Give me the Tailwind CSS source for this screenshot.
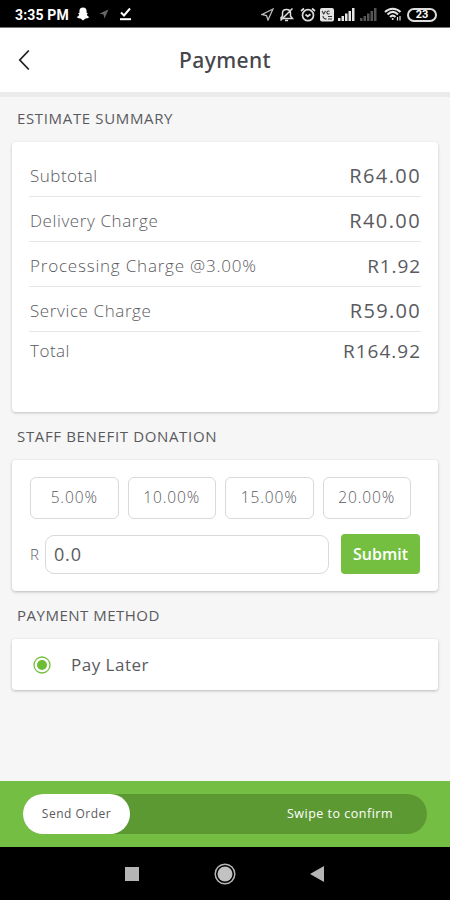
<!DOCTYPE html>
<html lang="en">

<head>
    <meta charset="UTF-8">
    <meta name="viewport" content="width=device-width, initial-scale=1.0">
    <title>Payment</title>
    <script src="https://cdn.jsdelivr.net/npm/@tailwindcss/browser@4"></script>
</head>

<body class="bg-[#f6f6f6] font-['Open_Sans',sans-serif] text-[#5a5a5e]">
    <div class="flex h-[900px] w-[450px] flex-col overflow-hidden">

        <!-- Status bar -->
        <div class="flex h-[28px] shrink-0 items-center border-b border-[#777] bg-black pl-[15px] pr-[13px] text-white">
            <span class="w-[55px] whitespace-nowrap font-['Roboto',sans-serif] text-[14px] font-bold leading-none tracking-[0.15px] pt-[2px]">3:35 PM</span>
            <svg class="ml-[6px] mt-[1px] h-[14px] w-[14px]" viewBox="0 0 14 14" fill="#fff">
                <path d="M7 .5C4.600.5 3.300 2.200 3.400 4.200V6L2 6.300 3.200 7.400C2.800 8.700 1.800 9.500.5 10L2.500 11.200 4.500 11.600 7 13.500 9.500 11.600 11.500 11.200 13.500 10C12.200 9.500 11.200 8.700 10.800 7.400L12 6.300 10.600 6V4.200C10.700 2.200 9.400.5 7 .5Z" />
            </svg>
            <svg class="ml-[9px] mt-[1px] h-[10px] w-[10px]" viewBox="0 0 10 10" fill="#666">
                <path d="M9.500.5.5 4.500 4.500 5.500 5.500 9.500Z" />
            </svg>
            <svg class="ml-[10px] mt-[1px] h-[14px] w-[13px]" viewBox="0 0 13 14" fill="none" stroke="#fff">
                <path d="M2 5.500 5 8.500 11 1.500" stroke-width="2" />
                <path d="M1 12.200H12" stroke-width="2" />
            </svg>
            <div class="ml-auto flex items-center pt-[1px]">
                <svg class="h-[13px] w-[13px]" viewBox="0 0 13 13" fill="none" stroke="#bbb" stroke-width="1.300">
                    <path d="M12 1 1 6.500 5.500 7.500 7 12Z" />
                </svg>
                <svg class="ml-[5px] h-[15px] w-[15px]" viewBox="0 0 15 15" fill="none" stroke="#ddd" stroke-width="1.500">
                    <path d="M1.500 11.500H13.500L11.500 9V6C11.500 3.800 9.800 2.500 7.500 2.500S3.500 3.800 3.500 6V9L1.500 11.500M6 13.500H9M13.500 1.500 1.500 13.500" />
                </svg>
                <svg class="ml-[6px] h-[15px] w-[16px]" viewBox="0 0 16 15" fill="none" stroke="#ddd" stroke-width="1.700">
                    <circle cx="8" cy="8.200" r="5.500" />
                    <path d="M1 4 4 1.500M15 4 12 1.500M5.500 7.500 7.700 9.300 10.500 7.200" />
                </svg>
                <svg class="ml-[4px] mt-[1px] h-[14px] w-[14px]" viewBox="0 0 14 14" fill="none" stroke="#333">
                    <rect x="0" y="0" width="14" height="13.500" rx="2" fill="#e4e4e4" stroke="none" />
                    <path d="M2 3 3.700 6 5.500 3M9.500 3.500A1.500 1.500 0 1 0 9.500 5.500M3 8C3 10 5 11 6.500 11M8 8.500H12M8 11H12" stroke-width="1.100" />
                </svg>
                <svg class="ml-[4px] h-[13px] w-[17px]" viewBox="0 0 17 13" fill="#e6e6e6">
                    <path d="M0 10H2.500V13H0ZM3.500 8H6V13H3.500ZM7 5.500H9.500V13H7ZM10.500 3H13V13H10.500ZM14 0H16.500V13H14Z" />
                </svg>
                <svg class="ml-[5px] h-[13px] w-[17px]" viewBox="0 0 17 13" fill="#555">
                    <path d="M0 10H2.500V13H0ZM3.500 8H6V13H3.500ZM7 5.500H9.500V13H7ZM10.500 3H13V13H10.500ZM14 0H16.500V13H14Z" />
                </svg>
                <svg class="ml-[7px] h-[14px] w-[18px]" viewBox="0 0 18 14" fill="none" stroke="#e6e6e6" stroke-width="2">
                    <path d="M1 5C5.500.5 12 .5 16.500 5M3.500 7.500C6.800 4.300 10.800 4.300 14 7.500M6 10C7.900 8.200 9.700 8.200 11.500 10" />
                    <circle cx="8.700" cy="12" r="1" fill="#e6e6e6" stroke="none" />
                    <path d="M13.500 10V13.500M16 9V13.500" stroke-width="1.200" />
                </svg>
                <div class="ml-[5px] mt-[1px] flex h-[14px] w-[30px] items-center justify-center rounded-full border-2 border-[#ddd] font-['Roboto',sans-serif] text-[11px] font-bold leading-none">23</div>
            </div>
        </div>

        <!-- Header -->
        <div class="flex h-[64px] shrink-0 items-center bg-white px-[18px]">
            <svg class="h-[22px] w-[12px]" viewBox="0 0 12 22" fill="none" stroke="#222" stroke-width="1.800">
                <path d="M10.800 1.500 1.800 11 10.800 20.500" />
            </svg>
            <h1 class="flex-1 pr-[12px] text-center font-['Noto_Sans',sans-serif] text-[21px] font-medium leading-none tracking-[0.4px] text-[#46464b]">Payment</h1>
        </div>
        <div class="h-[5px] shrink-0 bg-[#ebebeb]"></div>

        <div class="flex-1 px-[12px]">
            <h2 class="h-[45px] pl-[5px] pt-[10px] text-[15px] leading-[22px] tracking-[0.65px]">ESTIMATE SUMMARY</h2>
            <div class="h-[270px] rounded-[4px] bg-white px-[17px] pt-[10px] shadow-[0_1px_3px_rgba(0,0,0,0.22)]">
                <div class="flex h-[45px] items-center justify-between border-b border-[#e6e6e6] px-[1px] pt-[4px]">
                    <span class="text-[17px] font-[350] tracking-[0.5px]">Subtotal</span>
                    <span class="mr-[-1px] text-[20px] tracking-[1.400px]">R64.00</span>
                </div>
                <div class="flex h-[45px] items-center justify-between border-b border-[#e6e6e6] px-[1px] pt-[4px]">
                    <span class="text-[17px] font-[350] tracking-[0.6px]">Delivery Charge</span>
                    <span class="mr-[-1px] text-[20px] tracking-[1.400px]">R40.00</span>
                </div>
                <div class="flex h-[45px] items-center justify-between border-b border-[#e6e6e6] px-[1px] pt-[4px]">
                    <span class="text-[17px] font-[350] tracking-[0.8px]">Processing Charge @3.00%</span>
                    <span class="mr-[-1px] text-[19px] tracking-[0.9px]">R1.92</span>
                </div>
                <div class="flex h-[45px] items-center justify-between border-b border-[#e6e6e6] px-[1px] pt-[4px]">
                    <span class="text-[17px] font-[350] tracking-[0.6px]">Service Charge</span>
                    <span class="mr-[-1px] text-[20px] tracking-[1.300px]">R59.00</span>
                </div>
                <div class="flex h-[38px] items-center justify-between px-[1px]">
                    <span class="text-[17px] font-[350] tracking-[0.5px]">Total</span>
                    <span class="mr-[-1px] text-[19px] tracking-[1px]">R164.92</span>
                </div>
            </div>

            <h2 class="h-[48px] pl-[5px] pt-[13px] text-[15px] leading-[22px] tracking-[0.65px]">STAFF BENEFIT DONATION</h2>
            <div class="h-[131px] rounded-[4px] bg-white px-[18px] pt-[17px] shadow-[0_1px_3px_rgba(0,0,0,0.25)]">
                <div class="flex gap-[9px] text-[15.500px] font-[350] tracking-[0.9px]">
                    <div class="flex h-[42px] w-[88.500px] items-center justify-center rounded-[6px] border border-[#d9d9d9]">5.00%</div>
                    <div class="flex h-[42px] w-[88.500px] items-center justify-center rounded-[6px] border border-[#d9d9d9]">10.00%</div>
                    <div class="flex h-[42px] w-[88.500px] items-center justify-center rounded-[6px] border border-[#d9d9d9]">15.00%</div>
                    <div class="flex h-[42px] w-[88.500px] items-center justify-center rounded-[6px] border border-[#d9d9d9]">20.00%</div>
                </div>
                <div class="mt-[15px] flex items-center">
                    <span class="w-[15px] text-[15px] font-[350]">R</span>
                    <div class="flex h-[39px] w-[286px] items-center rounded-[9px] border border-[#d9d9d9] pl-[8px] text-[18px] tracking-[0.9px]">0.0</div>
                    <button class="ml-[12px] h-[40px] w-[79px] shrink-0 rounded-[4px] bg-[#74bf3f] text-[16px] font-semibold text-white">Submit</button>
                </div>
            </div>

            <h2 class="h-[48px] pl-[5px] pt-[13px] text-[15px] leading-[22px] tracking-[0.5px]">PAYMENT METHOD</h2>
            <div class="flex h-[51px] items-center rounded-[3px] bg-white pl-[21px] shadow-[0_1px_3px_rgba(0,0,0,0.25)]">
                <svg class="h-[18px] w-[18px]" viewBox="0 0 18 18">
                    <circle cx="9" cy="9" r="8" fill="none" stroke="#74bf3f" stroke-width="1.300" />
                    <circle cx="9" cy="9" r="5" fill="#6cbd35" />
                </svg>
                <span class="ml-[20px] text-[17px] tracking-[0.5px]">Pay Later</span>
            </div>
        </div>

        <!-- Swipe to confirm -->
        <div class="flex h-[66px] shrink-0 items-center bg-[#74bf43] px-[23px]">
            <div class="flex h-[40px] w-full items-center rounded-full bg-[#5d9933]">
                <div class="flex h-[40px] w-[107px] items-center justify-center rounded-full bg-white text-[12px] tracking-[0.5px]">Send Order</div>
                <span class="ml-auto pr-[34px] text-[12.500px] font-medium tracking-[0.5px] text-white">Swipe to confirm</span>
            </div>
        </div>

        <!-- Navigation bar -->
        <div class="flex h-[53px] shrink-0 items-center bg-black pl-[125px]">
            <div class="h-[14px] w-[14px] bg-[#b5b5b5]"></div>
            <svg class="ml-[75px] h-[22px] w-[22px]" viewBox="0 0 22 22">
                <circle cx="11" cy="11" r="9.800" fill="none" stroke="#b5b5b5" stroke-width="1.500" />
                <circle cx="11" cy="11" r="7.500" fill="#c2c2c2" />
            </svg>
            <svg class="ml-[74px] h-[16px] w-[14px]" viewBox="0 0 14 16" fill="#b5b5b5">
                <path d="M14 0V16L0 8Z" />
            </svg>
        </div>
    </div>
</body>

</html>
